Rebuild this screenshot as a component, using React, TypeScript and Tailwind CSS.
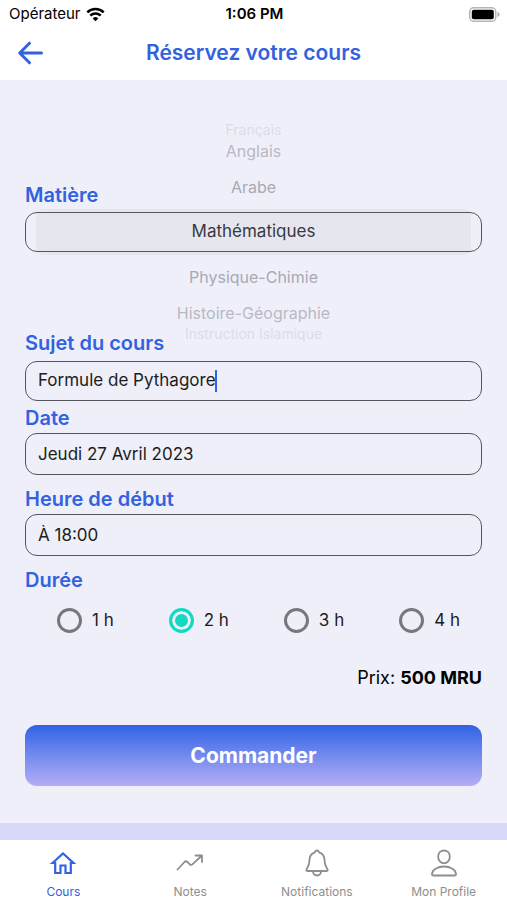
import { useState, type ReactNode } from "react";

const durations = ["1 h", "2 h", "3 h", "4 h"];

function StatusBar() {
  return (
    <div className="grid h-7 grid-cols-3 items-center pl-[9px] pr-[7px] text-[15px] text-black">
      <div className="flex items-center gap-[5px]">
        <span>Opérateur</span>
        <svg className="h-[15px] w-[19px]" viewBox="0 0 19 15" fill="none" stroke="#000" strokeWidth="2.5">
          <path d="M1.3 5.4a11.7 11.7 0 0 1 16.4 0" />
          <path d="M4.3 8.6a7.4 7.4 0 0 1 10.4 0" />
          <path d="M9.5 14.2 6.7 11.4a4 4 0 0 1 5.6 0z" fill="#000" stroke="none" />
        </svg>
      </div>
      <span className="text-center font-semibold">1:06 PM</span>
      <svg className="h-[15px] w-[31px] justify-self-end" viewBox="0 0 31 15">
        <rect x="0.75" y="0.75" width="26" height="13.5" rx="4" fill="#fff" stroke="#b5b5b5" strokeWidth="1.5" />
        <rect x="2.8" y="2.8" width="22" height="9.4" rx="2" fill="#000" />
        <path d="M28.5 5v5c1.3-.4 2-1.3 2-2.5s-.7-2.1-2-2.5z" fill="#a8a8a8" />
      </svg>
    </div>
  );
}

function SubjectWheel() {
  return (
    <ul
      role="listbox"
      aria-labelledby="matiere"
      className="col-start-1 row-start-1 flex flex-col text-center text-base text-[#a9a9b3]"
    >
      <li role="option" aria-selected="false" className="h-3 text-sm leading-3 text-[#dcdce6]">
        Français
      </li>
      <li role="option" aria-selected="false" className="h-[30px] leading-[30px] text-[#b9b9c3]">
        Anglais
      </li>
      <li role="option" aria-selected="false" className="h-[42px] leading-[42px]">
        Arabe
      </li>
      <li role="option" aria-selected="true" className="grid h-12 items-center text-[17px] text-[#39393d]">
        <span className="col-start-1 row-start-1 mx-[11px] h-[46px] rounded-lg bg-[#e6e6ef]" />
        <span className="col-start-1 row-start-1 flex h-10 items-center justify-center rounded-xl border border-[#55555b]">
          Mathématiques
        </span>
      </li>
      <li role="option" aria-selected="false" className="h-[42px] leading-[42px]">
        Physique-Chimie
      </li>
      <li role="option" aria-selected="false" className="h-[30px] leading-[30px] text-[#b9b9c3]">
        Histoire-Géographie
      </li>
      <li role="option" aria-selected="false" className="h-3 text-sm leading-3 text-[#dcdce6]">
        Instruction Islamique
      </li>
    </ul>
  );
}

const labelClass = "text-xl font-semibold leading-6 text-[#3262df]";
const boxClass = "rounded-xl border border-[#55555b] px-3 text-[17px] text-[#1c1c20]";

function Tab({ label, active, children }: { label: string; active?: boolean; children: ReactNode }) {
  return (
    <a
      href="#"
      aria-current={active ? "page" : undefined}
      className={`flex flex-col items-center gap-[7px] pt-[9px] text-xs ${active ? "text-[#3262df]" : "text-[#8e8e8e]"}`}
    >
      <svg
        className="size-7"
        viewBox="0 0 28 28"
        fill="none"
        stroke="currentColor"
        strokeWidth="1.8"
        strokeLinecap="round"
        strokeLinejoin="round"
      >
        {children}
      </svg>
      <span>{label}</span>
    </a>
  );
}

export default function App() {
  const [subject, setSubject] = useState("Formule de Pythagore");
  const [day, setDay] = useState("Jeudi 27 Avril 2023");
  const [hour, setHour] = useState("À 18:00");
  const [duration, setDuration] = useState("2 h");

  return (
    <div className="flex min-h-screen flex-col bg-[#efeffa] font-['Inter','Liberation_Sans',sans-serif]">
      <header className="bg-white">
        <StatusBar />
        <div className="grid h-[52px] grid-cols-[32px_1fr_32px] items-center px-4 pb-[3px]">
          <button type="button" aria-label="Retour">
            <svg
              className="h-6 w-7"
              viewBox="0 0 28 24"
              fill="none"
              stroke="#3262df"
              strokeWidth="3"
              strokeLinecap="round"
              strokeLinejoin="round"
            >
              <path d="M25.5 12H4M13.5 2.2 3.7 12l9.8 9.8" />
            </svg>
          </button>
          <h1 className="text-center text-[21px] font-semibold text-[#3262df]">Réservez votre cours</h1>
        </div>
      </header>

      <form className="flex flex-1 flex-col px-[25px] pt-11" onSubmit={(e) => e.preventDefault()}>
        <div className="grid">
          <SubjectWheel />
          <span id="matiere" className={`col-start-1 row-start-1 mt-[59px] self-start justify-self-start ${labelClass}`}>
            Matière
          </span>
        </div>

        <label htmlFor="sujet" className={`-mt-[9px] self-start ${labelClass}`}>
          Sujet du cours
        </label>
        <div className={`mt-[6px] flex h-10 items-center ${boxClass}`}>
          <input
            id="sujet"
            value={subject}
            onChange={(e) => setSubject(e.target.value)}
            className="field-sizing-content max-w-full bg-transparent outline-none"
          />
          <span className="-ml-px h-[22px] w-[2px] bg-[#3262df]" />
        </div>

        <label htmlFor="date" className={`mt-[5px] ${labelClass}`}>
          Date
        </label>
        <input
          id="date"
          value={day}
          onChange={(e) => setDay(e.target.value)}
          className={`mt-[3px] h-[42px] ${boxClass}`}
        />

        <label htmlFor="heure" className={`mt-3 ${labelClass}`}>
          Heure de début
        </label>
        <input
          id="heure"
          value={hour}
          onChange={(e) => setHour(e.target.value)}
          className={`mt-[3px] h-[42px] ${boxClass}`}
        />

        <fieldset className="mt-3">
          <legend className={labelClass}>Durée</legend>
          <div className="flex justify-between pl-8 pr-[22px] pt-4">
            {durations.map((d) => (
              <label key={d} className="flex items-center gap-[10px] text-[17px] leading-[25px] text-[#1c1c20]">
                <input
                  type="radio"
                  name="duree"
                  checked={duration === d}
                  onChange={() => setDuration(d)}
                  className="size-[25px] appearance-none rounded-full border-[3px] border-[#77777c] checked:border-[#12d9c4] checked:bg-[#12d9c4] checked:shadow-[inset_0_0_0_3px_#efeffa]"
                />
                {d}
              </label>
            ))}
          </div>
        </fieldset>

        <p className="mt-[31px] text-right text-lg text-black">
          Prix: <strong className="font-bold">500 MRU</strong>
        </p>

        <button
          type="submit"
          className="mb-[37px] mt-[33px] h-[61px] rounded-xl bg-linear-to-b from-[#2f62e4] to-[#b3adf5] text-[21px] font-bold text-white"
        >
          Commander
        </button>
      </form>

      <div className="h-[17px] bg-[#d8d8f8]" />
      <nav className="grid h-[60px] grid-cols-4 bg-white">
        <Tab label="Cours" active>
          <path
            d="M3.5 14 14 4.5 24.5 14h-2.7v10h-5.3v-7.5h-5V24H6.2V14z"
            strokeWidth="2.2"
            strokeLinejoin="miter"
          />
        </Tab>
        <Tab label="Notes">
          <path d="M1.5 20.5 8.5 13q1.5-1.5 3 0l2.3 2.3q1.2 1.2 2.5 0L26 6.500M19.500 6.500H26V13" />
        </Tab>
        <Tab label="Notifications">
          <path d="M14 1.500c-1.200 0-1.800.8-2.200 1.900C8.200 4.500 6.600 7.300 6.500 11c-.1 4.500-.8 6-2.500 8.500-1 1.500-1 2.500.5 2.500h19c1.500 0 1.500-1 .5-2.500-1.700-2.500-2.400-4-2.500-8.500-.1-3.700-1.700-6.500-5.300-7.600-.4-1.100-1-1.900-2.200-1.900zM10 22.300c0 2.400 1.700 4.200 4 4.200s4-1.800 4-4.200" />
        </Tab>
        <Tab label="Mon Profile">
          <path d="M14 1.500c-3.400 0-5.800 2.500-5.800 6.200 0 3.600 2.500 6.500 5.800 6.500s5.800-2.900 5.800-6.500c0-3.700-2.400-6.200-5.800-6.200zM14 17.500c-6 0-11.500 2.800-12 7.200-.1 1.200.5 1.800 1.600 1.800h20.800c1.100 0 1.700-.6 1.600-1.800-.5-4.400-6-7.200-12-7.200z" />
        </Tab>
      </nav>
    </div>
  );
}
